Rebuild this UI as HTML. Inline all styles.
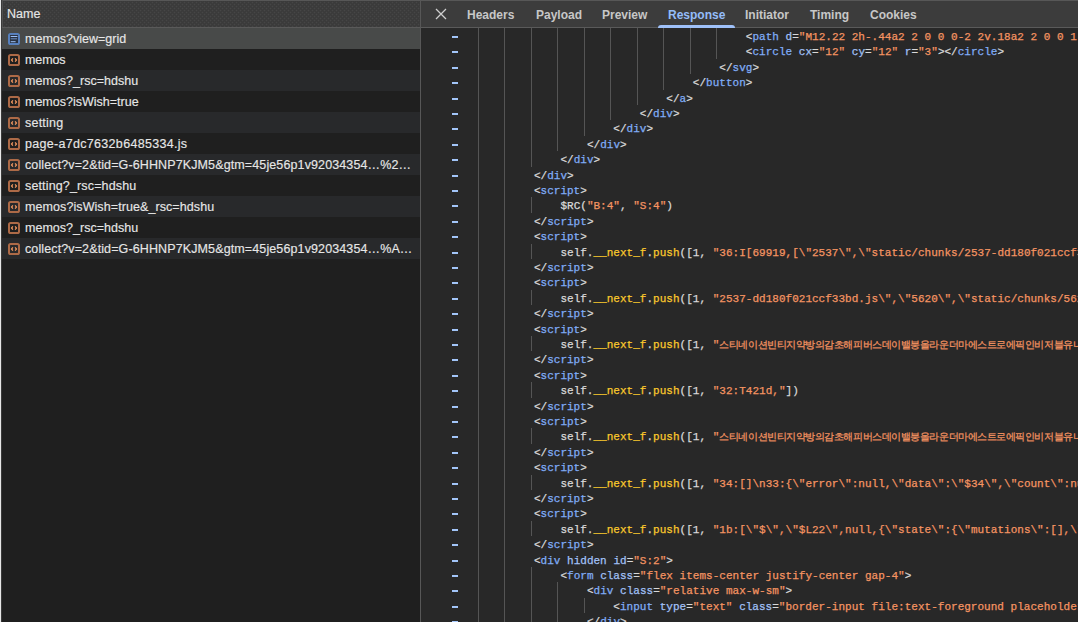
<!DOCTYPE html>
<html><head><meta charset="utf-8"><style>
html,body{margin:0;padding:0}
body{width:1078px;height:622px;overflow:hidden;position:relative;background:#1f1f1f;font-family:"Liberation Sans",sans-serif}
#lb0{position:absolute;left:0;top:0;width:1px;height:622px;background:#e6e6e6}
#lb1{position:absolute;left:1px;top:0;width:1px;height:622px;background:#3a3a3a}
#lhead{position:absolute;left:2px;top:0;width:418px;height:27px;background-color:#3a3a3a;background-image:radial-gradient(circle at 1.5px 1.5px,#464646 0.7px,transparent 1.1px),radial-gradient(circle at 1.5px 1.5px,#464646 0.7px,transparent 1.1px);background-size:4px 4px,4px 4px;background-position:0 0,2px 2px;border-top:1px solid #575757;border-left:1px solid #505050;box-sizing:border-box}
#lhead span{position:absolute;left:4px;top:6px;font-size:12.5px;color:#e6e6e6;-webkit-text-stroke:0.15px currentColor}
#lheadb{position:absolute;left:2px;top:27px;width:418px;height:1px;background:#5a5a5a}
.row{position:absolute;left:2px;width:418px;height:21px;background:#1f1f1f}
.row.odd{background:#28292b}
.row.sel{background:#484a49}
.ic{position:absolute;left:6px;top:5px}
.rt{position:absolute;left:23px;top:4px;font-size:12.5px;color:#e6e6e6;white-space:nowrap;-webkit-text-stroke:0.15px currentColor}
#div{position:absolute;left:420px;top:0;width:1px;height:622px;background:#575757}
#tabs{position:absolute;left:421px;top:0;width:657px;height:28px;background:#3c3c3c;border-top:1px solid #575757;border-bottom:1px solid #5a5a5a;box-sizing:border-box}
.tab{position:absolute;top:8px;font-size:12px;font-weight:bold;color:#c7c7c7;white-space:nowrap}
#code{position:absolute;left:421px;top:28px;width:657px;height:594px;background:#282828}
.ln{position:absolute;height:15.4px;line-height:15.4px;font-family:"Liberation Mono",monospace;font-size:11px;color:#d9d9d9;white-space:pre;letter-spacing:0.02px;-webkit-text-stroke:0.25px currentColor}
.gd{position:absolute;width:1px;background:#555555}
.dash{position:absolute;left:452px;width:6px;height:1px;background:#a4c6fa;border-bottom:1px solid rgba(150,185,240,.15)}
</style></head><body>
<div id="lb0"></div><div id="lb1"></div>
<div id="lhead"><span>Name</span></div><div id="lheadb"></div>
<div class="row sel" style="top:28px"><svg class="ic" width="12" height="12" viewBox="0 0 12 12"><rect x="1" y="1" width="10" height="10" rx="1.6" fill="none" stroke="#5780bd" stroke-width="2"/><rect x="2" y="2" width="8" height="8" fill="#2a3343"/><rect x="2.7" y="3" width="6.7" height="1" fill="#9cc0f6"/><rect x="2.7" y="5.3" width="6.4" height="1" fill="#6a8fc6"/><rect x="2.7" y="8.2" width="4.9" height="1" fill="#9cc0f6"/></svg><span class="rt" style="letter-spacing:0.012px">memos?view=grid</span></div><div class="row" style="top:49px"><svg class="ic" width="12" height="12" viewBox="0 0 12 12"><rect x="1" y="1" width="10" height="10" rx="1.6" fill="none" stroke="#ad6a47" stroke-width="2"/><path d="M4.9 4.3 L3.5 6 L4.9 7.7 M7.1 4.3 L8.5 6 L7.1 7.7" fill="none" stroke="#f59a62" stroke-width="1.2"/></svg><span class="rt" style="letter-spacing:-0.1px">memos</span></div><div class="row odd" style="top:70px"><svg class="ic" width="12" height="12" viewBox="0 0 12 12"><rect x="1" y="1" width="10" height="10" rx="1.6" fill="none" stroke="#ad6a47" stroke-width="2"/><path d="M4.9 4.3 L3.5 6 L4.9 7.7 M7.1 4.3 L8.5 6 L7.1 7.7" fill="none" stroke="#f59a62" stroke-width="1.2"/></svg><span class="rt" style="letter-spacing:0.023px">memos?_rsc=hdshu</span></div><div class="row" style="top:91px"><svg class="ic" width="12" height="12" viewBox="0 0 12 12"><rect x="1" y="1" width="10" height="10" rx="1.6" fill="none" stroke="#ad6a47" stroke-width="2"/><path d="M4.9 4.3 L3.5 6 L4.9 7.7 M7.1 4.3 L8.5 6 L7.1 7.7" fill="none" stroke="#f59a62" stroke-width="1.2"/></svg><span class="rt" style="letter-spacing:0.005px">memos?isWish=true</span></div><div class="row odd" style="top:112px"><svg class="ic" width="12" height="12" viewBox="0 0 12 12"><rect x="1" y="1" width="10" height="10" rx="1.6" fill="none" stroke="#ad6a47" stroke-width="2"/><path d="M4.9 4.3 L3.5 6 L4.9 7.7 M7.1 4.3 L8.5 6 L7.1 7.7" fill="none" stroke="#f59a62" stroke-width="1.2"/></svg><span class="rt" style="letter-spacing:0.22px">setting</span></div><div class="row" style="top:133px"><svg class="ic" width="12" height="12" viewBox="0 0 12 12"><rect x="1" y="1" width="10" height="10" rx="1.6" fill="none" stroke="#ad6a47" stroke-width="2"/><path d="M4.9 4.3 L3.5 6 L4.9 7.7 M7.1 4.3 L8.5 6 L7.1 7.7" fill="none" stroke="#f59a62" stroke-width="1.2"/></svg><span class="rt" style="letter-spacing:0.307px">page-a7dc7632b6485334.js</span></div><div class="row odd" style="top:154px"><svg class="ic" width="12" height="12" viewBox="0 0 12 12"><rect x="1" y="1" width="10" height="10" rx="1.6" fill="none" stroke="#ad6a47" stroke-width="2"/><path d="M4.9 4.3 L3.5 6 L4.9 7.7 M7.1 4.3 L8.5 6 L7.1 7.7" fill="none" stroke="#f59a62" stroke-width="1.2"/></svg><span class="rt" style="letter-spacing:0.118px">collect?v=2&amp;tid=G-6HHNP7KJM5&amp;gtm=45je56p1v92034354…%2…</span></div><div class="row" style="top:175px"><svg class="ic" width="12" height="12" viewBox="0 0 12 12"><rect x="1" y="1" width="10" height="10" rx="1.6" fill="none" stroke="#ad6a47" stroke-width="2"/><path d="M4.9 4.3 L3.5 6 L4.9 7.7 M7.1 4.3 L8.5 6 L7.1 7.7" fill="none" stroke="#f59a62" stroke-width="1.2"/></svg><span class="rt" style="letter-spacing:0.147px">setting?_rsc=hdshu</span></div><div class="row odd" style="top:196px"><svg class="ic" width="12" height="12" viewBox="0 0 12 12"><rect x="1" y="1" width="10" height="10" rx="1.6" fill="none" stroke="#ad6a47" stroke-width="2"/><path d="M4.9 4.3 L3.5 6 L4.9 7.7 M7.1 4.3 L8.5 6 L7.1 7.7" fill="none" stroke="#f59a62" stroke-width="1.2"/></svg><span class="rt" style="letter-spacing:0.084px">memos?isWish=true&amp;_rsc=hdshu</span></div><div class="row" style="top:217px"><svg class="ic" width="12" height="12" viewBox="0 0 12 12"><rect x="1" y="1" width="10" height="10" rx="1.6" fill="none" stroke="#ad6a47" stroke-width="2"/><path d="M4.9 4.3 L3.5 6 L4.9 7.7 M7.1 4.3 L8.5 6 L7.1 7.7" fill="none" stroke="#f59a62" stroke-width="1.2"/></svg><span class="rt" style="letter-spacing:0.017px">memos?_rsc=hdshu</span></div><div class="row odd" style="top:238px"><svg class="ic" width="12" height="12" viewBox="0 0 12 12"><rect x="1" y="1" width="10" height="10" rx="1.6" fill="none" stroke="#ad6a47" stroke-width="2"/><path d="M4.9 4.3 L3.5 6 L4.9 7.7 M7.1 4.3 L8.5 6 L7.1 7.7" fill="none" stroke="#f59a62" stroke-width="1.2"/></svg><span class="rt" style="letter-spacing:0.118px">collect?v=2&amp;tid=G-6HHNP7KJM5&amp;gtm=45je56p1v92034354…%A…</span></div>
<div id="div"></div>
<div id="tabs"></div>
<svg style="position:absolute;left:435px;top:8px" width="12" height="12" viewBox="0 0 12 12"><path d="M1 1 L11 11 M11 1 L1 11" stroke="#cfcfcf" stroke-width="1.25"/></svg>
<div class="tab" style="left:467px">Headers</div>
<div class="tab" style="left:536px">Payload</div>
<div class="tab" style="left:602px">Preview</div>
<div class="tab" style="left:668px;color:#94bcf9">Response</div>
<div style="position:absolute;left:658px;top:25px;width:77px;height:3px;background:#9fc1f9;border-radius:3px 3px 0 0"></div>
<div class="tab" style="left:745px">Initiator</div>
<div class="tab" style="left:810px">Timing</div>
<div class="tab" style="left:870px">Cookies</div>
<div id="code"></div>
<div class="gd" style="left:478px;top:28.0px;height:600.6px"></div><div class="gd" style="left:504px;top:28.0px;height:600.6px"></div><div class="gd" style="left:531px;top:28.0px;height:138.6px"></div><div class="gd" style="left:531px;top:197.4px;height:15.4px"></div><div class="gd" style="left:531px;top:243.6px;height:15.4px"></div><div class="gd" style="left:531px;top:289.8px;height:15.4px"></div><div class="gd" style="left:531px;top:336.0px;height:15.4px"></div><div class="gd" style="left:531px;top:382.2px;height:15.4px"></div><div class="gd" style="left:531px;top:428.4px;height:15.4px"></div><div class="gd" style="left:531px;top:474.6px;height:15.4px"></div><div class="gd" style="left:531px;top:520.8px;height:15.4px"></div><div class="gd" style="left:531px;top:567.0px;height:61.6px"></div><div class="gd" style="left:557px;top:28.0px;height:123.2px"></div><div class="gd" style="left:557px;top:582.4px;height:46.2px"></div><div class="gd" style="left:584px;top:28.0px;height:107.8px"></div><div class="gd" style="left:584px;top:597.8px;height:15.4px"></div><div class="gd" style="left:610px;top:28.0px;height:92.4px"></div><div class="gd" style="left:637px;top:28.0px;height:77.0px"></div><div class="gd" style="left:663px;top:28.0px;height:61.6px"></div><div class="gd" style="left:690px;top:28.0px;height:46.2px"></div><div class="gd" style="left:716px;top:28.0px;height:30.8px"></div>
<div class="dash" style="top:36px"></div><div class="dash" style="top:51px"></div><div class="dash" style="top:67px"></div><div class="dash" style="top:82px"></div><div class="dash" style="top:98px"></div><div class="dash" style="top:113px"></div><div class="dash" style="top:128px"></div><div class="dash" style="top:144px"></div><div class="dash" style="top:159px"></div><div class="dash" style="top:175px"></div><div class="dash" style="top:190px"></div><div class="dash" style="top:205px"></div><div class="dash" style="top:221px"></div><div class="dash" style="top:236px"></div><div class="dash" style="top:252px"></div><div class="dash" style="top:267px"></div><div class="dash" style="top:282px"></div><div class="dash" style="top:298px"></div><div class="dash" style="top:313px"></div><div class="dash" style="top:329px"></div><div class="dash" style="top:344px"></div><div class="dash" style="top:359px"></div><div class="dash" style="top:375px"></div><div class="dash" style="top:390px"></div><div class="dash" style="top:406px"></div><div class="dash" style="top:421px"></div><div class="dash" style="top:436px"></div><div class="dash" style="top:452px"></div><div class="dash" style="top:467px"></div><div class="dash" style="top:483px"></div><div class="dash" style="top:498px"></div><div class="dash" style="top:513px"></div><div class="dash" style="top:529px"></div><div class="dash" style="top:544px"></div><div class="dash" style="top:560px"></div><div class="dash" style="top:575px"></div><div class="dash" style="top:590px"></div><div class="dash" style="top:606px"></div><div class="dash" style="top:621px"></div>
<div class="ln" style="top:30.0px;left:745.8px">&lt;<span style="color:#80adf7">path</span> <span style="color:#a2c1f7">d</span>=<span style="color:#f59462">"M12.22 2h-.44a2 2 0 0 0-2 2v.18a2 2 0 0 1-1 1.73l-.43.25a2 2 0 0 1-2 0"</span>&gt;</div><div class="ln" style="top:45.4px;left:745.8px">&lt;<span style="color:#80adf7">circle</span> <span style="color:#a2c1f7">cx</span>=<span style="color:#f59462">"12"</span> <span style="color:#a2c1f7">cy</span>=<span style="color:#f59462">"12"</span> <span style="color:#a2c1f7">r</span>=<span style="color:#f59462">"3"</span>&gt;&lt;/<span style="color:#80adf7">circle</span>&gt;</div><div class="ln" style="top:60.8px;left:719.3px">&lt;/<span style="color:#80adf7">svg</span>&gt;</div><div class="ln" style="top:76.2px;left:692.8px">&lt;/<span style="color:#80adf7">button</span>&gt;</div><div class="ln" style="top:91.6px;left:666.3px">&lt;/<span style="color:#80adf7">a</span>&gt;</div><div class="ln" style="top:107.0px;left:639.8px">&lt;/<span style="color:#80adf7">div</span>&gt;</div><div class="ln" style="top:122.4px;left:613.3px">&lt;/<span style="color:#80adf7">div</span>&gt;</div><div class="ln" style="top:137.8px;left:586.9px">&lt;/<span style="color:#80adf7">div</span>&gt;</div><div class="ln" style="top:153.2px;left:560.4px">&lt;/<span style="color:#80adf7">div</span>&gt;</div><div class="ln" style="top:168.6px;left:533.9px">&lt;/<span style="color:#80adf7">div</span>&gt;</div><div class="ln" style="top:184.0px;left:533.9px">&lt;<span style="color:#80adf7">script</span>&gt;</div><div class="ln" style="top:199.4px;left:560.4px">$RC(<span style="color:#f59462">"B:4"</span>, <span style="color:#f59462">"S:4"</span>)</div><div class="ln" style="top:214.8px;left:533.9px">&lt;/<span style="color:#80adf7">script</span>&gt;</div><div class="ln" style="top:230.2px;left:533.9px">&lt;<span style="color:#80adf7">script</span>&gt;</div><div class="ln" style="top:245.6px;left:560.4px">self.<span style="color:#fbc92c">__next_f</span>.<span style="color:#fbc92c">push</span>([1, <span style="color:#f59462">"36:I[69919,[\"2537\",\"static/chunks/2537-dd180f021ccf33bd.js\"</span></div><div class="ln" style="top:261.0px;left:533.9px">&lt;/<span style="color:#80adf7">script</span>&gt;</div><div class="ln" style="top:276.4px;left:533.9px">&lt;<span style="color:#80adf7">script</span>&gt;</div><div class="ln" style="top:291.8px;left:560.4px">self.<span style="color:#fbc92c">__next_f</span>.<span style="color:#fbc92c">push</span>([1, <span style="color:#f59462">"2537-dd180f021ccf33bd.js\",\"5620\",\"static/chunks/5620-abc.js\"</span></div><div class="ln" style="top:307.2px;left:533.9px">&lt;/<span style="color:#80adf7">script</span>&gt;</div><div class="ln" style="top:322.6px;left:533.9px">&lt;<span style="color:#80adf7">script</span>&gt;</div><div class="ln" style="top:338.0px;left:560.4px">self.<span style="color:#fbc92c">__next_f</span>.<span style="color:#fbc92c">push</span>([1, <span style="color:#f59462">"<span style="font-size:10px;letter-spacing:-0.45px">스티네이션빈티지약방의감초해피버스데이밸붕올라운더마에스트로에픽인비저블유니버스</span></span></div><div class="ln" style="top:353.4px;left:533.9px">&lt;/<span style="color:#80adf7">script</span>&gt;</div><div class="ln" style="top:368.8px;left:533.9px">&lt;<span style="color:#80adf7">script</span>&gt;</div><div class="ln" style="top:384.2px;left:560.4px">self.<span style="color:#fbc92c">__next_f</span>.<span style="color:#fbc92c">push</span>([1, <span style="color:#f59462">"32:T421d,"</span>])</div><div class="ln" style="top:399.6px;left:533.9px">&lt;/<span style="color:#80adf7">script</span>&gt;</div><div class="ln" style="top:415.0px;left:533.9px">&lt;<span style="color:#80adf7">script</span>&gt;</div><div class="ln" style="top:430.4px;left:560.4px">self.<span style="color:#fbc92c">__next_f</span>.<span style="color:#fbc92c">push</span>([1, <span style="color:#f59462">"<span style="font-size:10px;letter-spacing:-0.45px">스티네이션빈티지약방의감초해피버스데이밸붕올라운더마에스트로에픽인비저블유니버스</span></span></div><div class="ln" style="top:445.8px;left:533.9px">&lt;/<span style="color:#80adf7">script</span>&gt;</div><div class="ln" style="top:461.2px;left:533.9px">&lt;<span style="color:#80adf7">script</span>&gt;</div><div class="ln" style="top:476.6px;left:560.4px">self.<span style="color:#fbc92c">__next_f</span>.<span style="color:#fbc92c">push</span>([1, <span style="color:#f59462">"34:[]\n33:{\"error\":null,\"data\":\"$34\",\"count\":null}</span></div><div class="ln" style="top:492.0px;left:533.9px">&lt;/<span style="color:#80adf7">script</span>&gt;</div><div class="ln" style="top:507.4px;left:533.9px">&lt;<span style="color:#80adf7">script</span>&gt;</div><div class="ln" style="top:522.8px;left:560.4px">self.<span style="color:#fbc92c">__next_f</span>.<span style="color:#fbc92c">push</span>([1, <span style="color:#f59462">"1b:[\"$\",\"$L22\",null,{\"state\":{\"mutations\":[],\"queries\"</span></div><div class="ln" style="top:538.2px;left:533.9px">&lt;/<span style="color:#80adf7">script</span>&gt;</div><div class="ln" style="top:553.6px;left:533.9px">&lt;<span style="color:#80adf7">div</span> <span style="color:#a2c1f7">hidden</span> <span style="color:#a2c1f7">id</span>=<span style="color:#f59462">"S:2"</span>&gt;</div><div class="ln" style="top:569.0px;left:560.4px">&lt;<span style="color:#80adf7">form</span> <span style="color:#a2c1f7">class</span>=<span style="color:#f59462">"flex items-center justify-center gap-4"</span>&gt;</div><div class="ln" style="top:584.4px;left:586.9px">&lt;<span style="color:#80adf7">div</span> <span style="color:#a2c1f7">class</span>=<span style="color:#f59462">"relative max-w-sm"</span>&gt;</div><div class="ln" style="top:599.8px;left:613.3px">&lt;<span style="color:#80adf7">input</span> <span style="color:#a2c1f7">type</span>=<span style="color:#f59462">"text"</span> <span style="color:#a2c1f7">class</span>=<span style="color:#f59462">"border-input file:text-foreground placeholder:text-muted-foreground"</span>&gt;</div><div class="ln" style="top:615.2px;left:586.9px">&lt;/<span style="color:#80adf7">div</span>&gt;</div>
</body></html>
